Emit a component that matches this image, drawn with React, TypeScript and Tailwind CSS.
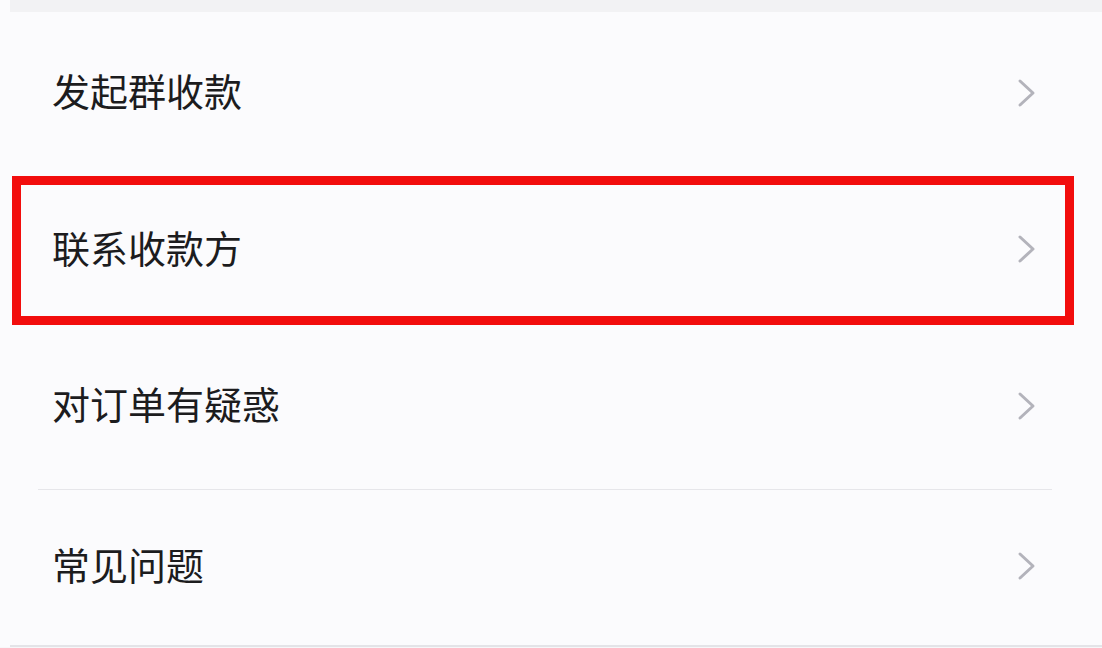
import React from "react";

const Chevron = () => (
  <svg width="20" height="30" viewBox="0 0 20 30" className="shrink-0 mb-[3px]">
    <path d="M3 3 L16 15 L3 27" fill="none" stroke="#b3b3bb" strokeWidth="3" strokeLinecap="round" strokeLinejoin="round" />
  </svg>
);

const Row = ({ label, className = "" }: { label: string; className?: string }) => (
  <div className={`flex items-center justify-between ${className}`}>
    <span className="text-[38px] leading-none text-[#1c1c1e] mb-[8px]">{label}</span>
    <Chevron />
  </div>
);

export default function App() {
  return (
    <div
      className="w-[1102px] h-[648px] overflow-hidden bg-[#fbfbfd] flex flex-col"
      style={{ fontFamily: '"Noto Sans CJK SC", "Noto Sans", sans-serif' }}
    >
      <div className="h-[12px] ml-[10px] bg-[#f2f2f4] shrink-0" />
      <Row label="发起群收款" className="h-[164px] pl-[52px] pr-[65px] shrink-0" />
      <div className="ml-[12px] mr-[28px] h-[149px] border-[9px] border-[#f20d0d] shrink-0">
        <Row label="联系收款方" className="h-full pl-[31px] pr-[28px]" />
      </div>
      <Row label="对订单有疑惑" className="h-[164px] pl-[52px] pr-[65px] shrink-0" />
      <div className="h-px ml-[38px] mr-[50px] bg-[#e6e6ea] shrink-0" />
      <Row label="常见问题" className="h-[155px] pl-[52px] pr-[65px] shrink-0" />
      <div className="h-[2px] ml-[10px] bg-[#e4e4e8] shrink-0" />
      <div className="flex-1 bg-[#f7f7f9]" />
    </div>
  );
}
